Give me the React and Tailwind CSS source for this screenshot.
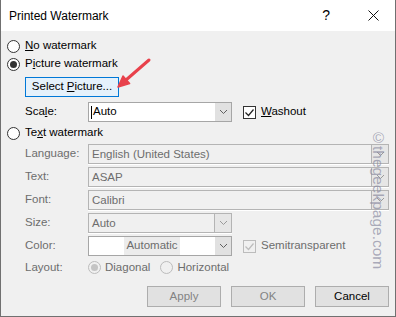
import React from 'react';

const FONT = 'font-["Segoe_UI","Liberation_Sans",Arial,sans-serif]';

const Chevron = ({ color = '#606060' }) => (
  <svg width="9" height="6" viewBox="0 0 9 6" fill="none">
    <path d="M1 1l3.5 3.5L8 1" stroke={color} strokeWidth="1" />
  </svg>
);

const Radio = ({ checked, disabled }) => (
  <span
    className={`flex h-[13px] w-[13px] shrink-0 items-center justify-center rounded-full border ${
      disabled ? 'border-[#bcbcbc] bg-[#f0f0f0]' : 'border-[#333333] bg-white'
    }`}
  >
    {checked && (
      <span className={`h-[7px] w-[7px] rounded-full ${disabled ? 'bg-[#c4c4c4]' : 'bg-[#333333]'}`} />
    )}
  </span>
);

const Checkbox = ({ disabled }) => (
  <span
    className={`flex h-[13px] w-[13px] shrink-0 items-center justify-center border ${
      disabled ? 'border-[#bcbcbc] bg-[#f0f0f0]' : 'border-[#333333] bg-white'
    }`}
  >
    <svg width="11" height="9" viewBox="0 0 11 9" fill="none">
      <path d="M1.5 4.5l3 3 5-6" stroke={disabled ? '#bcbcbc' : '#222222'} strokeWidth="1.2" />
    </svg>
  </span>
);

// disabled combo box (grey body, boxed arrow at right)
const DisabledCombo = ({ value, className = '' }) => (
  <div className={`flex h-[20px] border border-[#b4b4b4] bg-[#f0f0f0] shadow-[0_1px_0_#ffffff] ${className}`}>
    <span className="flex-1 pl-[3px] leading-[18px] text-[#6d6d6d]">{value}</span>
    <span className="flex w-[17px] items-center justify-center border-l border-[#b4b4b4] bg-[#e6e6e6]">
      <Chevron color="#9a9a9a" />
    </span>
  </div>
);

const Label = ({ children, disabled }) => (
  <span className={`w-[63px] shrink-0 ${disabled ? 'text-[#6d6d6d]' : 'text-black'}`}>{children}</span>
);

export default function App() {
  return (
    <div
      className={`relative flex h-[317px] w-[396px] flex-col border-x border-b border-[#707070] bg-[#f0f0f0] text-[11.5px] text-black ${FONT}`}
    >
      {/* Title bar */}
      <div className="flex h-[31px] shrink-0 items-center bg-white pl-[8px] text-[12px]">
        <span className="flex-1">Printed Watermark</span>
        <span className="mr-[38px] text-[14px]">?</span>
        <svg width="11" height="11" viewBox="0 0 11 11" className="mr-[16px]">
          <path d="M0.5 0.5l10 10M10.5 0.5l-10 10" stroke="#111111" strokeWidth="1" />
        </svg>
      </div>

      {/* Body */}
      <div className="flex flex-1 flex-col px-[6px] pt-[6px]">
        <div className="flex h-[18px] items-center gap-[5px]">
          <Radio />
          <span>
            <u>N</u>o watermark
          </span>
        </div>
        <div className="flex h-[18px] items-center gap-[5px]">
          <Radio checked />
          <span>
            P<u>i</u>cture watermark
          </span>
        </div>

        <div className="ml-[18px] mt-[4px] flex h-[20px] w-[94px] items-center justify-center border border-[#0078d7] bg-[#e5f1fb]">
          Select <u className="ml-[3px]">P</u>icture...
        </div>

        <div className="ml-[18px] mt-[5px] flex h-[20px] items-center">
          <Label>
            Sca<u>l</u>e:
          </Label>
          <div className="flex h-[20px] w-[144px] border border-[#a6a6a6] bg-white">
            <span className="flex flex-1 items-center pl-[2px]">
              <span className="mr-[1px] h-[13px] w-px bg-black" />
              Auto
            </span>
            <span className="flex w-[16px] items-center justify-center bg-[#e1e1e1]">
              <Chevron />
            </span>
          </div>
          <span className="ml-[11px] flex items-center gap-[5px]">
            <Checkbox />
            <span>
              <u>W</u>ashout
            </span>
          </span>
        </div>

        <div className="mt-[2px] flex h-[18px] items-center gap-[5px]">
          <Radio />
          <span>
            Te<u>x</u>t watermark
          </span>
        </div>

        <div className="ml-[18px] mt-[2px] flex flex-col gap-[3px]">
          <div className="flex items-center">
            <Label disabled>Language:</Label>
            <DisabledCombo value="English (United States)" className="flex-1" />
          </div>
          <div className="flex items-center">
            <Label disabled>Text:</Label>
            <DisabledCombo value="ASAP" className="flex-1" />
          </div>
          <div className="flex items-center">
            <Label disabled>Font:</Label>
            <DisabledCombo value="Calibri" className="flex-1" />
          </div>
          <div className="flex items-center">
            <Label disabled>Size:</Label>
            <DisabledCombo value="Auto" className="w-[144px]" />
          </div>
          <div className="flex items-center">
            <Label disabled>Color:</Label>
            <div className="flex h-[20px] w-[144px] border border-[#a6a6a6] bg-white">
              <span className="flex flex-1 items-center justify-center">
                <span className="bg-[#ececec] px-[2px] text-[#6d6d6d]">Automatic</span>
              </span>
              <span className="flex w-[16px] items-center justify-center bg-[#e1e1e1]">
                <Chevron />
              </span>
            </div>
            <span className="ml-[11px] flex items-center gap-[5px]">
              <Checkbox disabled />
              <span className="text-[#6d6d6d]">Semitransparent</span>
            </span>
          </div>
        </div>

        <div className="ml-[18px] mt-[3px] flex h-[17px] items-center text-[#6d6d6d]">
          <Label disabled>Layout:</Label>
          <span className="flex items-center gap-[4px]">
            <Radio checked disabled />
            Diagonal
          </span>
          <span className="ml-[10px] flex items-center gap-[4px]">
            <Radio disabled />
            Horizontal
          </span>
        </div>

        <div className="mt-[10px] flex justify-end gap-[10px]">
          <div className="flex h-[21px] w-[74px] items-center justify-center border border-[#adadad] bg-[#e1e1e1] text-[#838383]">
            Apply
          </div>
          <div className="flex h-[21px] w-[74px] items-center justify-center border border-[#adadad] bg-[#e1e1e1] text-[#838383]">
            OK
          </div>
          <div className="flex h-[21px] w-[74px] items-center justify-center border border-[#adadad] bg-[#e1e1e1]">
            Cancel
          </div>
        </div>
      </div>

      {/* site watermark overlay */}
      <span className="pointer-events-none absolute left-[368px] top-[129px] text-[15.5px] leading-[18px] text-[#8a8aa0]/70 [writing-mode:vertical-rl] font-['Liberation_Sans',sans-serif]">
        ©thegeekpage.com
      </span>

      {/* red annotation arrow */}
      <svg className="pointer-events-none absolute left-[110px] top-[54px]" width="46" height="40" viewBox="0 0 46 40">
        <line x1="38" y1="6" x2="15" y2="26" stroke="#e8414b" strokeWidth="3" strokeLinecap="round" />
        <path d="M7 33L18.6 29.6L12 22Z" fill="#e8414b" stroke="#e8414b" strokeWidth="1.5" strokeLinejoin="round" />
      </svg>
    </div>
  );
}
